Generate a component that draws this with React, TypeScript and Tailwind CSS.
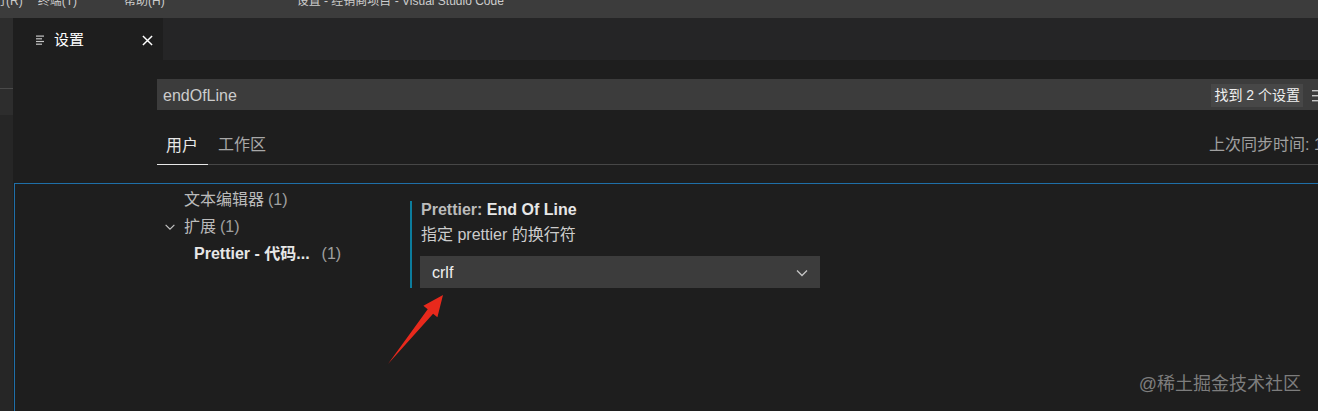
import React from "react"

const font = { fontFamily: '"Liberation Sans", "Noto Sans CJK SC", sans-serif' }

function Chevron({ className }: { className?: string }) {
  return (
    <svg viewBox="0 0 16 16" className={className} fill="none" stroke="currentColor" strokeWidth="1.3">
      <path d="M3 5.5l5 5 5-5" />
    </svg>
  )
}

function TitleBar() {
  return (
    <div className="h-[18px] shrink-0 bg-[#3c3c3c] relative overflow-hidden text-[12px] text-[#cccccc]">
      <div className="flex -mt-[8px] h-[18px] leading-[18px] whitespace-nowrap">
        <span className="-ml-[18px]">运行(R)</span>
        <span className="ml-[15px]">终端(T)</span>
        <span className="ml-[47px]">帮助(H)</span>
        <span className="ml-[132px]">设置 - 经销商项目 - Visual Studio Code</span>
      </div>
    </div>
  )
}

function TocItem({ label, bold, indent, chevron }: { label: string; bold?: boolean; indent: string; chevron?: boolean }) {
  return (
    <div className={`flex items-center h-[27px] whitespace-nowrap ${indent}`}>
      {chevron && <Chevron className="w-[14px] h-[14px] text-[#c5c5c5] mr-[7px]" />}
      <span className={bold ? "font-bold text-[#e7e7e7]" : "text-[#bbbbbb]"}>{label}</span>
      <span className={`text-[#a0a0a0] ${bold ? "ml-[12px]" : "ml-[4px]"}`}>(1)</span>
    </div>
  )
}

export default function App() {
  return (
    <div className="w-[1318px] h-[411px] overflow-hidden relative bg-[#1e1e1e] flex flex-col" style={font}>
      <TitleBar />
      <div className="flex flex-1 min-h-0">
        <div className="w-[13px] shrink-0 flex flex-col bg-[#262626]">
          <div className="h-[71px] bg-[#2d2d2d] border-b border-[#4a4a4a]" />
          <div className="h-[26px] bg-[#2d2d2d]" />
        </div>
        <div className="flex-1 flex flex-col min-w-0">
          <div className="h-[42px] shrink-0 flex bg-[#252526]">
            <div className="w-[150px] bg-[#1e1e1e] flex items-center pl-[23px] pr-[10px] pt-[2px]">
              <svg viewBox="0 0 10 10" className="w-[10px] h-[10px] text-[#c5c5c5]" fill="currentColor">
                <rect x="0" y="0.5" width="8" height="1.2" />
                <rect x="0" y="3.2" width="6" height="1.2" />
                <rect x="0" y="5.9" width="8" height="1.2" />
                <rect x="0" y="8.6" width="6" height="1.2" />
              </svg>
              <span className="ml-[8px] text-[15px] text-white">设置</span>
              <svg viewBox="0 0 12 12" className="ml-auto w-[11px] h-[11px] text-white" stroke="currentColor" strokeWidth="1.6">
                <path d="M1 1l10 10M11 1L1 11" />
              </svg>
            </div>
          </div>

          <div className="pl-[144px] pt-[19px]">
            <div className="w-[1175px] h-[31px] bg-[#3c3c3c] flex items-center pl-[6px] pr-[6px] pt-[2px]">
              <span className="text-[16px] text-[#cccccc]">endOfLine</span>
              <span className="ml-auto h-[23px] px-[3px] bg-[#474747] text-[14px] leading-[23px] text-[#f0f0f0] whitespace-nowrap">找到 2 个设置</span>
              <svg viewBox="0 0 14 12" className="ml-[9px] w-[14px] h-[12px] text-[#c5c5c5]" fill="currentColor">
                <rect x="0" y="0" width="14" height="1.4" />
                <rect x="0" y="5" width="14" height="1.4" />
                <rect x="0" y="10" width="14" height="1.4" />
              </svg>
            </div>
            <div className="h-[55px] flex items-end border-b border-[#474747] w-[1200px] whitespace-nowrap text-[16px]">
              <div className="w-[1052px] shrink-0 flex items-end">
                <div className="px-[9px] pr-[10px] h-[31px] leading-[24px] text-[#e7e7e7] border-b border-[#e7e7e7] -mb-px">用户</div>
                <div className="px-[10px] h-[31px] leading-[24px] text-[#a8a8a8]">工作区</div>
              </div>
              <div className="h-[31px] leading-[24px] text-[#a0a0a0]">上次同步时间: 1 分钟前</div>
            </div>
          </div>

          <div className="mt-[18px] ml-[1px] flex-1 border-l border-t border-[#1f6fa8] flex text-[16px]">
            <div className="w-[395px] shrink-0 pt-[2px]">
              <TocItem label="文本编辑器" indent="pl-[169px]" />
              <TocItem label="扩展" indent="pl-[148px]" chevron />
              <TocItem label="Prettier - 代码..." indent="pl-[179px]" bold />
            </div>
            <div className="mt-[17px] self-start border-l-2 border-[#0c7d9d] pl-[9px]">
              <div className="h-[18px] leading-[18px] whitespace-nowrap">
                <span className="font-bold text-[#bbbbbb]">Prettier: </span>
                <span className="font-bold text-[#e7e7e7]">End Of Line</span>
              </div>
              <div className="mt-[7px] h-[18px] leading-[18px] text-[#cccccc] whitespace-nowrap">指定 prettier 的换行符</div>
              <div className="mt-[12px] -ml-px w-[400px] h-[32px] bg-[#3c3c3c] flex items-center pl-[12px] pr-[10px] pt-[2px]">
                <span className="text-[#f0f0f0]">crlf</span>
                <Chevron className="ml-auto w-[16px] h-[16px] text-[#c5c5c5]" />
              </div>
            </div>
          </div>
        </div>
      </div>

      <svg className="absolute inset-0 pointer-events-none" width="1318" height="411" viewBox="0 0 1318 411">
        <polygon
          points="388,364 427.7,309.3 423.4,305.8 443,295 437.4,317.2 433.1,313.7"
          fill="#e8291c"
        />
      </svg>

      <div className="absolute right-[17px] top-[372px] text-[18px] leading-[24px] text-[#7d7d7d] whitespace-nowrap">
        @稀土掘金技术社区
      </div>
    </div>
  )
}
